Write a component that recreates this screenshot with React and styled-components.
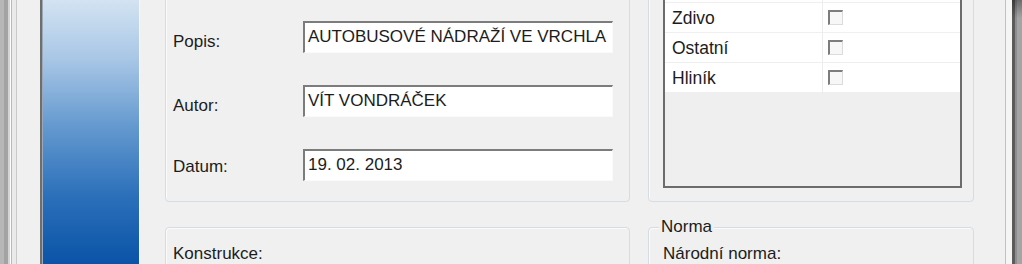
import React from "react";
import styled, { createGlobalStyle } from "styled-components";

const GlobalStyle = createGlobalStyle`
  html, body {
    margin: 0;
    padding: 0;
    background: #f0f0f0;
  }
  body {
    font-family: "Liberation Sans", Arial, sans-serif;
    color: #1c1c1c;
  }
`;

const Window = styled.div`
  width: 1022px;
  height: 264px;
  display: flex;
  overflow: hidden;
  background: #f0f0f0;
`;

const LeftFrame = styled.div`
  flex: none;
  width: 43px;
  background: linear-gradient(
    to right,
    #b7b7b7 0 4px,
    #a3a3a3 4px 8px,
    #d4d4d4 8px 10px,
    #fdfdfd 10px 11px,
    #b9b9b9 11px 12px,
    #eaeaea 12px 16px,
    #c9c9c9 16px 17px,
    #f0f0f0 17px 40px,
    #6e6e6e 40px 42px,
    #9aa8b8 42px 43px
  );
`;

const SidePanel = styled.div`
  flex: none;
  width: 97px;
  box-sizing: border-box;
  border-right: 1px solid #f4f8fc;
  background: linear-gradient(
    to bottom,
    #d3e3f2 0%,
    #a9c7e6 22%,
    #6499cf 48%,
    #2c70ba 74%,
    #0a53a6 100%
  );
`;

const Content = styled.div`
  flex: 1;
  display: grid;
  grid-template-columns: 465px 326px;
  grid-template-rows: 242px 80px;
  column-gap: 18px;
  row-gap: 25px;
  padding: 0 31px 0 25px;
  margin-top: -40px;
  align-content: start;
`;

const RightFrame = styled.div`
  flex: none;
  width: 17px;
  background:
    linear-gradient(to bottom, rgba(0, 0, 0, 0.35), rgba(0, 0, 0, 0) 18px),
    linear-gradient(
      to right,
      #c2c2c2 0 1px,
      #f5f5f5 1px 7px,
      #5c5c5c 7px 10px,
      #8e8e8e 10px 12px,
      #a4a4a4 12px 17px
    );
  background-size: 10px 100%, 100% 100%;
  background-position: 7px 0, 0 0;
  background-repeat: no-repeat;
`;

const GroupBox = styled.div`
  position: relative;
  box-sizing: border-box;
  border: 1px solid #d5dce2;
  border-radius: 4px;
  box-shadow: inset 1px 1px 0 #fbfbfb;
  padding: ${({ $pad }) => $pad || "0"};
  display: flex;
  flex-direction: column;
`;

const Legend = styled.span`
  position: absolute;
  top: -11px;
  left: 10px;
  padding: 0 2px;
  background: #f0f0f0;
  font-size: 17px;
  line-height: 20px;
`;

const FormGrid = styled.div`
  display: grid;
  grid-template-columns: 130px 310px;
  grid-auto-rows: 32px;
  row-gap: 32px;
`;

const Label = styled.div`
  font-size: 17px;
  line-height: 20px;
  padding-top: ${({ $top }) => $top || 11}px;
  white-space: nowrap;
`;

const TextBox = styled.div`
  box-sizing: border-box;
  height: 32px;
  background: #fff;
  border-top: 2px solid #7c7c7c;
  border-left: 2px solid #7c7c7c;
  border-right: 1px solid #fafafa;
  border-bottom: 1px solid #fafafa;
  padding: 4px 3px 5px 3px;
  font-size: 17px;
  line-height: 20px;
  white-space: nowrap;
  overflow: hidden;
`;

const Table = styled.div`
  flex: 1;
  border: 2px solid #6c6c6c;
  background: #efefef;
  overflow: hidden;
`;

const Row = styled.div`
  display: grid;
  grid-template-columns: 158px 1fr;
  height: 30px;
  box-sizing: border-box;
  background: #fff;
  border-bottom: 1px solid #efefef;
`;

const NameCell = styled.div`
  padding-left: 7px;
  font-size: 17.5px;
  line-height: 30px;
  border-right: 1px solid #ececec;
  white-space: nowrap;
`;

const CheckCell = styled.div`
  display: flex;
  align-items: center;
  padding-left: 5px;
`;

const CheckBox = styled.span`
  width: 15px;
  height: 15px;
  box-sizing: border-box;
  border-top: 2px solid #7d7d7d;
  border-left: 2px solid #7d7d7d;
  border-right: 1px solid #dcdcdc;
  border-bottom: 1px solid #dcdcdc;
  background: #f7f7f7;
  margin-top: -2px;
`;

const fields = [
  { label: "Popis:", value: "AUTOBUSOVÉ NÁDRAŽÍ VE VRCHLA", top: 11 },
  { label: "Autor:", value: "VÍT VONDRÁČEK", top: 11 },
  { label: "Datum:", value: "19. 02. 2013", top: 8 },
];

// the first row lies above the visible area, only its bottom line shows
const materials = [null, "Zdivo", "Ostatní", "Hliník"];

export default function App() {
  return (
    <>
      <GlobalStyle />
      <Window>
        <LeftFrame />
        <SidePanel />
        <Content>
          <GroupBox $pad="60px 16px 0 7px">
            <FormGrid>
              {fields.map((f) => (
                <React.Fragment key={f.label}>
                  <Label $top={f.top}>{f.label}</Label>
                  <TextBox>{f.value}</TextBox>
                </React.Fragment>
              ))}
            </FormGrid>
          </GroupBox>
          <GroupBox $pad="10px 11px 13px 14px">
            <Table>
              {materials.map((m, i) => (
                <Row key={i}>
                  <NameCell>{m}</NameCell>
                  <CheckCell>{m && <CheckBox />}</CheckCell>
                </Row>
              ))}
            </Table>
          </GroupBox>
          <GroupBox $pad="0 0 0 7px">
            <Label $top={16}>Konstrukce:</Label>
          </GroupBox>
          <GroupBox $pad="0 0 0 14px">
            <Legend>Norma</Legend>
            <Label $top={16}>Národní norma:</Label>
          </GroupBox>
        </Content>
        <RightFrame />
      </Window>
    </>
  );
}
